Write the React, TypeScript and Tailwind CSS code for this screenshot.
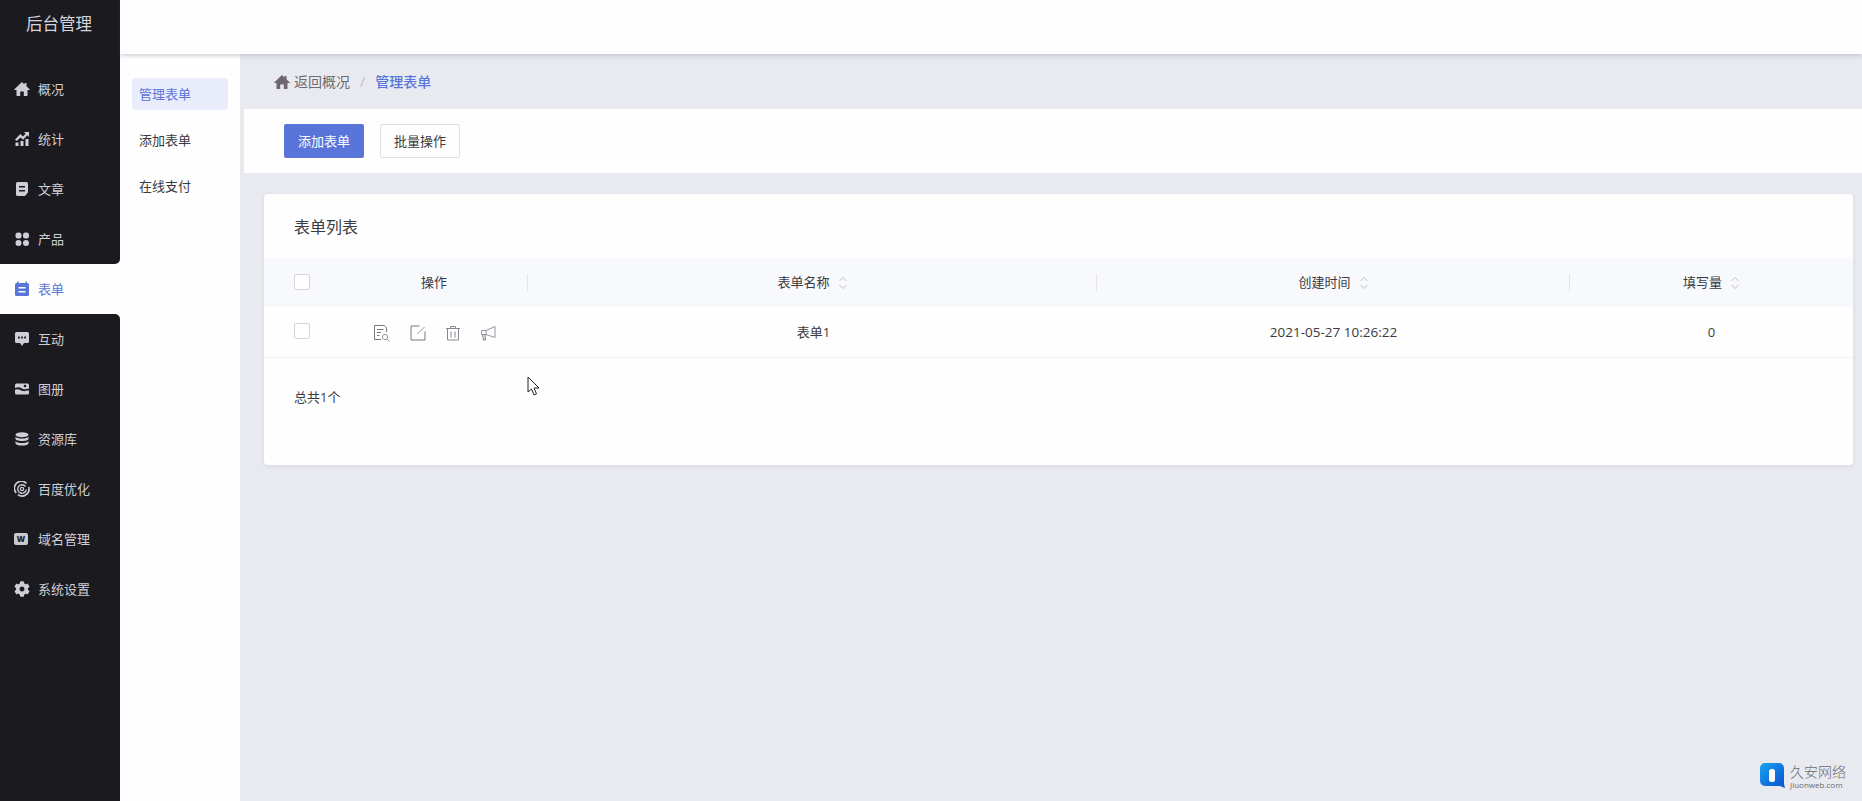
import type { ReactNode } from 'react'
import { FaCog } from 'react-icons/fa'

const font = { fontFamily: '"Open Sans", "Noto Sans CJK SC", sans-serif' }

function Glyph({ children, className = '' }: { children: ReactNode, className?: string }) {
  return (
    <svg viewBox="0 0 16 16" fill="currentColor" className={`w-[16px] h-[16px] ${className}`}>
      {children}
    </svg>
  )
}

function HomeIcon({ className = '' }: { className?: string }) {
  return (
    <Glyph className={className}>
      <path d="M8 1 .4 8.200c-.3.3-.1.8.3.8H2.500v5.500c0 .3.2.5.5.5h3.200v-4.500h3.600V15H13c.3 0 .5-.2.5-.5V9h1.800c.4 0 .6-.5.3-.8L12.500 5.300V2h-2v1.400L8 1Z" />
    </Glyph>
  )
}

function StatsIcon() {
  return (
    <Glyph>
      <path d="M10 1h5v5l-1.700-1.700-4.300 4.400-2.500-2.300L2.600 10 1 8.400l5.400-5.300 2.500 2.300 2.800-2.700L10 1Z" />
      <rect x="1.500" y="11.500" width="3" height="3.500" />
      <rect x="6.500" y="10" width="3" height="5" />
      <rect x="11.500" y="8" width="3" height="7" />
    </Glyph>
  )
}

function ArticleIcon() {
  return (
    <Glyph>
      <path fillRule="evenodd" d="M3.500 1h9A1.500 1.500 0 0 1 14 2.500v9L11 15H3.500A1.500 1.500 0 0 1 2 13.500v-11A1.500 1.500 0 0 1 3.500 1ZM5 5v1.500h6V5H5Zm0 4v1.500h6V9H5Z" />
    </Glyph>
  )
}

function ProductIcon() {
  return (
    <Glyph>
      <rect x="1.500" y="1.500" width="6" height="6" rx="2.500" />
      <rect x="9" y="1.500" width="6" height="6" rx="2.500" />
      <circle cx="4.500" cy="12" r="3" />
      <circle cx="12" cy="12" r="3" />
    </Glyph>
  )
}

function FormIcon() {
  return (
    <Glyph>
      <path fillRule="evenodd" d="M3 0.500h1.500v1.500h7V0.500H13V2h.5A1.500 1.500 0 0 1 15 3.500v10a1.500 1.500 0 0 1-1.500 1.500h-11A1.500 1.500 0 0 1 1 13.500v-10A1.500 1.500 0 0 1 2.500 2H3V.500ZM4.500 6v1.500h7V6h-7Zm0 4v1.500h7V10h-7Z" />
    </Glyph>
  )
}

function ChatIcon() {
  return (
    <Glyph>
      <path fillRule="evenodd" d="M2.500 1h11A1.500 1.500 0 0 1 15 2.500v8a1.500 1.500 0 0 1-1.500 1.500H10l-2 3-2-3H2.500A1.500 1.500 0 0 1 1 10.500v-8A1.500 1.500 0 0 1 2.500 1ZM4 5.500v2h1.800v-2H4Zm3.100 0v2h1.800v-2H7.100Zm3.100 0v2H12v-2h-1.800Z" />
    </Glyph>
  )
}

function AlbumIcon() {
  return (
    <Glyph>
      <path d="M2.500 2.500h11A1.500 1.500 0 0 1 15 4v3.700c-2.500-.2-3.500 1-5.500.5C7.500 7.700 6 5.200 1 7V4a1.500 1.500 0 0 1 1.500-1.500Z" />
      <path d="M1 8.800c3.800-1.800 5.500.9 8.200 1.300 2.300.4 3.500-1 5.800-.5V12a1.500 1.500 0 0 1-1.500 1.500h-11A1.500 1.500 0 0 1 1 12V8.800Z" />
      <circle cx="11" cy="5" r="1.300" fill="#1b1a1f" />
    </Glyph>
  )
}

function DatabaseIcon() {
  return (
    <Glyph>
      <ellipse cx="8" cy="3.800" rx="6.500" ry="2.500" />
      <path d="M1.500 5.500v2.300C1.500 9.200 4.400 10 8 10s6.500-.8 6.500-2.200V5.500C14 7 11 7.600 8 7.600S2 7 1.500 5.500Z" />
      <path d="M1.500 10v2.200C1.500 13.600 4.400 14.500 8 14.500s6.500-.9 6.500-2.300V10c-.5 1.500-3.500 2-6.500 2s-6-.5-6.500-2Z" />
    </Glyph>
  )
}

function SeoIcon() {
  return (
    <svg viewBox="0 0 16 16" fill="none" stroke="currentColor" className="w-[16px] h-[16px]">
      <path d="M12.500 2.500A7 7 0 0 0 2.200 12" strokeWidth="1.600" />
      <path d="M3.800 13.600A7 7 0 0 0 14.700 6" strokeWidth="1.600" />
      <path d="M11.500 5.500A4.300 4.300 0 1 0 12.300 8.500" strokeWidth="1.400" />
      <circle cx="8" cy="8" r="1.600" strokeWidth="1.200" />
    </svg>
  )
}

function DomainIcon() {
  return (
    <span className="w-[14px] h-[12px] rounded-[2px] bg-[#c9c8d0] text-[#1b1a1f] flex items-center justify-center text-[8px] leading-none font-extrabold">
      W
    </span>
  )
}

function SortIcon() {
  return (
    <svg viewBox="0 0 10 14" fill="none" stroke="#b9b9c0" strokeWidth="0.900" className="w-[10px] h-[14px] ml-[8px]">
      <path d="M1.500 5 5 1.500 8.500 5" />
      <path d="M1.500 9 5 12.500 8.500 9" />
    </svg>
  )
}

function Checkbox() {
  return <span className="block w-[16px] h-[16px] rounded-[2px] border border-[#d6d6da] bg-white" />
}

function MenuItem({ icon, label, active = false }: { icon: ReactNode, label: string, active?: boolean }) {
  return (
    <div className={`h-[50px] flex items-center pl-[14px] text-[13px] ${active ? 'text-[#5a75d9] bg-[#fdfefd]' : 'text-[#cfced6]'}`}>
      <span className="w-[24px] flex items-center">{icon}</span>
      <span className="pt-[1px]">{label}</span>
    </div>
  )
}

function TableHead({ children, sortable = false, divider = false }: { children: ReactNode, sortable?: boolean, divider?: boolean }) {
  return (
    <div className="relative flex items-center justify-center">
      <span className="text-[13px] text-[#3a3a40]">{children}</span>
      {sortable && <SortIcon />}
      {divider && <span className="absolute right-0 top-[16px] h-[17px] w-px bg-[#e2e2e8]" />}
    </div>
  )
}

function ActionIcons() {
  return (
    <div className="flex items-center justify-center gap-[19px] text-[#7d7480] pt-[1px]">
      <svg viewBox="0 0 18 18" fill="none" stroke="currentColor" className="w-[18px] h-[18px]">
        <path d="M8 15.500H1.500V1.500h10L13.500 4v4" />
        <path d="M4 5.500h6.500M4 8.500h4M4 11.500h2.500" />
        <circle cx="12" cy="13" r="2.600" stroke="#9a95a0" />
        <path d="m14 15 2.500 2.500" stroke="#9a95a0" />
      </svg>
      <svg viewBox="0 0 16 16" fill="none" stroke="currentColor" className="w-[16px] h-[16px]">
        <path d="M9.500 1H1v14h14V6.500" />
        <path d="M14.500 2 7.500 9" stroke="#9a95a0" />
      </svg>
      <svg viewBox="0 0 16 16" fill="none" stroke="#8c8590" className="w-[16px] h-[16px]">
        <path d="M1 3.500h14M5.500 3.500V1.500h5v2M2.500 3.500V15h11V3.500M6 6.500V12.500M10 6.500V12.500" />
      </svg>
      <svg viewBox="0 0 16 16" fill="none" stroke="#9a95a0" className="w-[16px] h-[16px]">
        <path d="M6 5.500 15 1.500V12.500L6 9.500" />
        <path d="M1.500 5.500H6V9.500H1.500Z" />
        <path d="M2.500 9.500 3.500 15H5.500L5 9.500" stroke="#7d7480" />
      </svg>
    </div>
  )
}

export default function App() {
  return (
    <div className="relative h-[801px] w-full overflow-hidden flex bg-[#e9eaf0] text-[#3a3a40]" style={font}>
      <aside className="w-[120px] shrink-0 flex flex-col bg-[#fdfefd]">
        <div className="bg-[#1b1a1f] rounded-br-[5px]">
          <div className="h-[64px] pb-[15px] pr-[2px] flex items-center justify-center text-[16.500px] text-[#d6d5dc]">后台管理</div>
          <MenuItem icon={<HomeIcon />} label="概况" />
          <MenuItem icon={<StatsIcon />} label="统计" />
          <MenuItem icon={<ArticleIcon />} label="文章" />
          <MenuItem icon={<ProductIcon />} label="产品" />
        </div>
        <MenuItem icon={<FormIcon />} label="表单" active />
        <div className="flex-1 bg-[#1b1a1f] rounded-tr-[5px]">
          <MenuItem icon={<ChatIcon />} label="互动" />
          <MenuItem icon={<AlbumIcon />} label="图册" />
          <MenuItem icon={<DatabaseIcon />} label="资源库" />
          <MenuItem icon={<SeoIcon />} label="百度优化" />
          <MenuItem icon={<DomainIcon />} label="域名管理" />
          <MenuItem icon={<FaCog className="w-[16px] h-[16px]" />} label="系统设置" />
        </div>
      </aside>

      <div className="flex-1 min-w-0 flex flex-col">
        <header className="relative z-10 h-[54px] shrink-0 bg-[#fdfefd] shadow-[0_2px_4px_rgba(90,90,120,0.25)]" />
        <div className="flex-1 flex min-h-0">
          <nav className="w-[120px] shrink-0 bg-[#fdfefd] px-[12px] pt-[24px] text-[13px] text-[#3a3a40]">
            <div className="h-[32px] rounded-[4px] bg-[#e8ecfb] text-[#5a75d9] flex items-center pl-[7px] pt-[1px] mb-[14px]">管理表单</div>
            <div className="h-[32px] flex items-center pl-[7px] pt-[1px] mb-[14px]">添加表单</div>
            <div className="h-[32px] flex items-center pl-[7px] pt-[1px]">在线支付</div>
          </nav>

          <main className="flex-1 min-w-0 pl-[4px]">
            <div className="h-[55px] pl-[30px] flex items-center text-[14px]">
              <HomeIcon className="text-[#6f6672] mr-[4px]" />
              <span className="text-[#6b6b70]">返回概况</span>
              <span className="text-[#c0c0c6] mx-[10px]">/</span>
              <span className="text-[#5a75d9] font-medium">管理表单</span>
            </div>

            <div className="h-[64px] bg-[#fdfefd] pl-[40px] flex items-center gap-[16px] text-[13px]">
              <button className="w-[80px] h-[34px] pt-[1px] rounded-[2px] bg-[#5a75d9] text-white">添加表单</button>
              <button className="w-[80px] h-[34px] pt-[1px] rounded-[2px] border border-[#dfe0e6] text-[#3a3a40]">批量操作</button>
            </div>

            <section className="ml-[20px] mr-[9px] mt-[21px] h-[271px] rounded-[4px] bg-[#fdfefd] shadow-[0_1px_4px_rgba(90,90,120,0.12)]">
              <h2 className="h-[64px] pl-[30px] pt-[1px] flex items-center text-[16px] font-normal text-[#3a3a40]">表单列表</h2>
              <div className="grid grid-cols-[76px_188px_569px_473px_1fr] h-[49px] bg-[#f8f9fc]">
                <div className="flex items-center pl-[30px] pb-[2px]"><Checkbox /></div>
                <TableHead divider>操作</TableHead>
                <TableHead sortable divider>表单名称</TableHead>
                <TableHead sortable divider>创建时间</TableHead>
                <TableHead sortable>填写量</TableHead>
              </div>
              <div className="grid grid-cols-[76px_188px_569px_473px_1fr] h-[51px] border-b border-[#f1f2f4] text-[13px] text-[#3a3a40]">
                <div className="flex items-center pl-[30px] pb-[3px]"><Checkbox /></div>
                <ActionIcons />
                <div className="flex items-center justify-center pt-[1px] pl-[2px]">表单1</div>
                <div className="flex items-center justify-center pt-[1px] text-[13.500px]">2021-05-27 10:26:22</div>
                <div className="flex items-center justify-center pt-[1px]">0</div>
              </div>
              <p className="pl-[30px] pt-[29px] text-[13px] leading-[20px]">总共1个</p>
            </section>
          </main>
        </div>
      </div>

      {/* mouse pointer caught in the recording */}
      <svg viewBox="0 0 14 21" className="absolute left-[527px] top-[376px] w-[14px] h-[21px]" fill="#fff" stroke="#222" strokeWidth="1">
        <path d="M1 1v15l3.500-3 2.500 6 2.500-1-2.500-6h5L1 1Z" />
      </svg>

      {/* watermark */}
      <div className="absolute left-[1759px] top-[763px] flex items-center gap-[5px]">
        <svg viewBox="0 0 26 26" className="w-[26px] h-[26px]">
          <defs>
            <linearGradient id="wm" x1="0" y1="0" x2="1" y2="1">
              <stop offset="0" stopColor="#1aa3f0" />
              <stop offset="1" stopColor="#0a4fd0" />
            </linearGradient>
          </defs>
          <path d="M6 0h14a5 5 0 0 1 5 5v16l1 4-5-2H6a5 5 0 0 1-5-5V5a5 5 0 0 1 5-5Z" fill="url(#wm)" />
          <rect x="10" y="6" width="6" height="13" rx="2.500" fill="#fff" />
        </svg>
        <div className="w-[56px] flex flex-col text-[#6a6a70]">
          <span className="text-[14px] leading-[16px] font-light whitespace-nowrap">久安网络</span>
          <span className="text-[8px] leading-[9px] whitespace-nowrap">Jiuonweb.com</span>
        </div>
      </div>
    </div>
  )
}
